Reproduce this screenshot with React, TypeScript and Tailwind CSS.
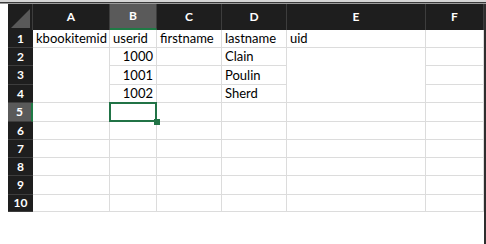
import React from "react";

const cols = [
  { l: "A", w: 77 },
  { l: "B", w: 47 },
  { l: "C", w: 65 },
  { l: "D", w: 65 },
  { l: "E", w: 139 },
  { l: "F", w: 58 },
];

const rowHeights = [18, 18, 19, 18, 19, 18, 18, 18, 19, 17];

type Cell = { t?: string; right?: boolean };
const data: Cell[][] = [
  [{ t: "kbookitemid" }, { t: "userid" }, { t: "firstname" }, { t: "lastname" }, { t: "uid" }, {}],
  [{}, { t: "1000", right: true }, {}, { t: "Clain" }, {}, {}],
  [{}, { t: "1001", right: true }, {}, { t: "Poulin" }, {}, {}],
  [{}, { t: "1002", right: true }, {}, { t: "Sherd" }, {}, {}],
];

export default function App() {
  return (
    <div
      className="w-[486px] h-[244px] bg-white overflow-hidden flex flex-col"
      style={{ fontFamily: "Lato, 'Open Sans', sans-serif" }}
    >
      <div className="h-[2px] bg-[#d6d6d6] shrink-0" />
      <div className="h-[1px] bg-[#3a3a3a] shrink-0" />
      <div className="h-[1px] bg-[#9c9c9c] shrink-0" />
      <div className="flex flex-1">
        <div className="w-[8px] shrink-0" />
        <div className="flex flex-col w-[476px]">
          {/* header row */}
          <div className="flex h-[26px] bg-[#1e1e1e]">
            <div className="w-[25px] h-full relative border-r border-[#3d3d3d]">
              <svg className="absolute right-[2px] bottom-[2px]" width="19" height="19" viewBox="0 0 19 19">
                <polygon points="19,0 19,19 0,19" fill="#595959" />
              </svg>
            </div>
            {cols.map((c) => (
              <div
                key={c.l}
                style={{ width: c.w }}
                className={
                  c.l === "B"
                    ? "h-full flex items-center justify-center bg-[#5a5a5a] border-r border-[#3d3d3d] border-b-2 border-b-[#1f7a45] text-white font-bold text-[12px]"
                    : "h-full flex items-center justify-center border-r border-[#3d3d3d] text-white font-bold text-[12px]"
                }
              >
                {c.l}
              </div>
            ))}
          </div>
          {rowHeights.map((h, ri) => (
            <div key={ri} className="flex" style={{ height: h }}>
              <div
                className={
                  ri === 4
                    ? "w-[25px] h-full bg-[#5a5a5a] border-b border-[#3d3d3d] border-r-2 border-r-[#1f7a45] flex items-center justify-center text-white font-bold text-[12px]"
                    : "w-[25px] h-full bg-[#1e1e1e] border-b border-[#3d3d3d] flex items-center justify-center text-white font-bold text-[12px]"
                }
              >
                {ri + 1}
              </div>
              {cols.map((c, ci) => {
                const cell = data[ri]?.[ci] ?? {};
                const noBottom = (ci === 0 && (ri === 1 || ri === 2)) || (ci === 4 && (ri === 1 || ri === 2));
                const selected = ri === 4 && ci === 1;
                return (
                  <div
                    key={c.l}
                    style={{ width: c.w }}
                    className={
                      (noBottom
                        ? "h-full border-r border-[#dcdcdc] "
                        : "h-full border-r border-b border-[#dcdcdc] ") +
                      (cell.right ? "flex items-center justify-end pr-[3px] " : "flex items-center pl-[3px] ") +
                      "relative text-[13px] text-black leading-none"
                    }
                  >
                    {cell.t}
                    {selected && (
                      <div className="absolute z-10 left-[-1px] top-[-1px] right-[-1px] bottom-[-1px] border-2 border-[#217346]">
                        <div className="absolute right-[-5px] bottom-[-5px] w-[6px] h-[6px] bg-[#217346]" />
                      </div>
                    )}
                  </div>
                );
              })}
            </div>
          ))}
        </div>
        <div className="w-[2px] bg-[#2e2e2e]" />
      </div>
    </div>
  );
}
